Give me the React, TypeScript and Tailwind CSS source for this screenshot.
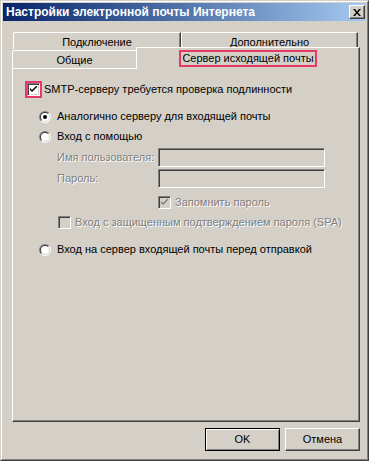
import React from "react";

const font = "font-['Liberation_Sans',Arial,sans-serif]";
const dis = "text-[#808080] [text-shadow:1px_1px_0_#ffffff]";

function Check({ checked, disabled }: { checked?: boolean; disabled?: boolean }) {
  return (
    <div
      className={`w-[13px] h-[13px] shrink-0 flex items-center justify-center border border-t-[#808080] border-l-[#808080] border-r-white border-b-white shadow-[inset_1px_1px_0_#404040,inset_-1px_-1px_0_#d4d0c8] ${
        disabled ? "bg-[#d4d0c8]" : "bg-white"
      }`}
    >
      {checked && (
        <svg width="7" height="7" viewBox="0 0 7 7">
          <path d="M0 2 L0 4 L2 6 L7 1 L7 -1 L2 4 Z" fill={disabled ? "#808080" : "#000"} />
        </svg>
      )}
    </div>
  );
}

function Radio({ on }: { on?: boolean }) {
  return (
    <svg width="12" height="12" viewBox="0 0 12 12" className="shrink-0">
      <path d="M1.757 10.243 A6 6 0 0 1 10.243 1.757 Z" fill="#808080" />
      <path d="M1.757 10.243 A6 6 0 0 0 10.243 1.757 Z" fill="#ffffff" />
      <path d="M2.464 9.536 A5 5 0 0 1 9.536 2.464 Z" fill="#404040" />
      <path d="M2.464 9.536 A5 5 0 0 0 9.536 2.464 Z" fill="#d4d0c8" />
      <circle cx="6" cy="6" r="4" fill="#ffffff" />
      {on && <circle cx="6" cy="6" r="2" fill="#000" />}
    </svg>
  );
}

function Field() {
  return (
    <div className="w-[167px] h-[19px] bg-[#d4d0c8] border border-t-[#808080] border-l-[#808080] border-r-white border-b-white shadow-[inset_1px_1px_0_#404040,inset_-1px_-1px_0_#d4d0c8]" />
  );
}

export default function App() {
  return (
    <div className={`w-[369px] h-[461px] bg-[#d4d0c8] text-[11px] text-black ${font}`}>
      <div className="w-full h-full border border-t-[#d4d0c8] border-l-[#d4d0c8] border-r-[#404040] border-b-[#404040]">
        <div className="w-full h-full border border-t-white border-l-white border-r-[#808080] border-b-[#808080] p-px flex flex-col">
          {/* Title bar */}
          <div className="h-[18px] flex items-center justify-between pl-[3px] pr-[1px] bg-gradient-to-r from-[#0a246a] to-[#a6caf0]">
            <span className="text-white font-bold text-[12px] leading-none">
              Настройки электронной почты Интернета
            </span>
            <div className="w-[16px] h-[14px] bg-[#d4d0c8] flex items-center justify-center border border-t-white border-l-white border-r-[#404040] border-b-[#404040] shadow-[inset_-1px_-1px_0_#808080]">
              <svg width="8" height="7" viewBox="0 0 8 7">
                <path d="M0 0 H2 L4 2.5 L6 0 H8 L5 3.5 L8 7 H6 L4 4.5 L2 7 H0 L3 3.5 Z" fill="#000" />
              </svg>
            </div>
          </div>

          {/* Tabs back row */}
          <div className="mt-[11px] pl-[10px] flex h-[17px]">
            <div className="w-[168px] h-[17px] flex items-center justify-center pt-[3px] border-t border-l border-r border-t-white border-l-white border-r-[#404040] rounded-tl-[2px] shadow-[inset_-1px_0_0_#808080]">
              Подключение
            </div>
            <div className="w-[177px] h-[17px] flex items-center justify-center pt-[3px] border-t border-l border-r border-t-white border-l-white border-r-[#404040] rounded-tl-[2px] shadow-[inset_-1px_0_0_#808080]">
              Дополнительно
            </div>
          </div>

          {/* Tabs front row */}
          <div className="-mt-[2px] pl-[9px] flex items-start h-[21px]">
            <div className="mt-[3px] w-[124px] h-[18px] bg-[#d4d0c8] flex items-center justify-center pt-[2px] border-t border-l border-t-white border-l-white rounded-tl-[2px]">
              Общие
            </div>
            <div className="relative z-10 w-[224px] h-[22px] bg-[#d4d0c8] flex items-start justify-center pt-[2px] border-t border-l border-r border-t-white border-l-white border-r-[#404040] rounded-tl-[2px] shadow-[inset_-1px_0_0_#808080]">
              <span className="px-[1px] leading-[13px] border-2 border-[#e8386a]">Сервер исходящей почты</span>
            </div>
          </div>

          {/* Panel */}
          <div className="ml-[9px] w-[348px] h-[354px] border border-t-white border-l-white border-r-[#404040] border-b-[#404040] shadow-[inset_-1px_-1px_0_#808080] flex flex-col">
            <div className="mt-[14px] ml-[14px] h-[13px] flex items-center">
              <div className="outline-2 outline-[#e8386a]">
                <Check checked />
              </div>
              <span className="ml-[4px]">SMTP-серверу требуется проверка подлинности</span>
            </div>

            <div className="mt-[14px] ml-[26px] h-[13px] flex items-center">
              <Radio on />
              <span className="ml-[6px]">Аналогично серверу для входящей почты</span>
            </div>
            <div className="mt-[7px] ml-[26px] h-[13px] flex items-center">
              <Radio />
              <span className="ml-[6px]">Вход с помощью</span>
            </div>

            <div className="mt-[5px] ml-[44px] h-[19px] flex items-center">
              <span className={`w-[101px] ${dis}`}>Имя пользователя:</span>
              <Field />
            </div>
            <div className="mt-[2px] ml-[44px] h-[19px] flex items-center">
              <span className={`w-[101px] ${dis}`}>Пароль:</span>
              <Field />
            </div>

            <div className="mt-[8px] ml-[145px] h-[13px] flex items-center">
              <Check checked disabled />
              <span className={`ml-[4px] ${dis}`}>Запомнить пароль</span>
            </div>
            <div className="mt-[7px] ml-[45px] h-[13px] flex items-center">
              <Check disabled />
              <span className={`ml-[4px] ${dis}`}>Вход с защищенным подтверждением пароля (SPA)</span>
            </div>

            <div className="mt-[14px] ml-[26px] h-[13px] flex items-center">
              <Radio />
              <span className="ml-[6px]">Вход на сервер входящей почты перед отправкой</span>
            </div>
          </div>

          {/* Buttons */}
          <div className="mt-[6px] mr-[6px] flex justify-end gap-[5px]">
            <button className="w-[75px] h-[23px] bg-[#d4d0c8] border border-black shadow-[inset_1px_1px_0_#ffffff,inset_-1px_-1px_0_#808080]">
              OK
            </button>
            <button className="w-[75px] h-[23px] bg-[#d4d0c8] border border-t-white border-l-white border-r-[#404040] border-b-[#404040] shadow-[inset_-1px_-1px_0_#808080]">
              Отмена
            </button>
          </div>
        </div>
      </div>
    </div>
  );
}
